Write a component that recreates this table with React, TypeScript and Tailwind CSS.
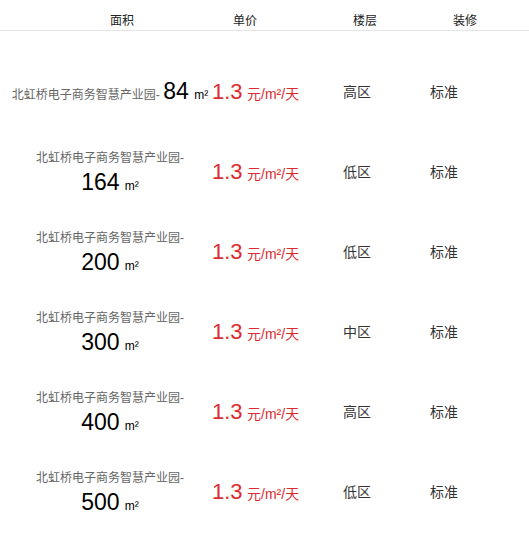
import React from "react";

const rows = [
  { area: "84", floor: "高区" },
  { area: "164", floor: "低区" },
  { area: "200", floor: "低区" },
  { area: "300", floor: "中区" },
  { area: "400", floor: "高区" },
  { area: "500", floor: "低区" },
];

export default function App() {
  return (
    <div
      className="w-[529px] h-[537px] bg-white text-[#333]"
      style={{ fontFamily: '"Liberation Sans", "Noto Sans CJK SC", sans-serif' }}
    >
      <div className="flex h-[31px] border-b border-[#e5e5e5] pl-[110px] pt-[13px] text-[12px] leading-[16px] text-[#222]">
        <div className="w-[123px]">面积</div>
        <div className="w-[120px]">单价</div>
        <div className="w-[100px]">楼层</div>
        <div>装修</div>
      </div>
      <div className="mt-[21px]">
        {rows.map((r, i) => (
          <div key={i} className="flex h-[80px] items-center">
            <div className="ml-[10px] w-[200px] text-center text-[12px] leading-[22px] text-[#666]">
              北虹桥电子商务智慧产业园-{" "}
              <span className="whitespace-nowrap text-black">
                <span className="mr-[2px] text-[23px] leading-[27px]">{r.area}</span> m²
              </span>
            </div>
            <div className="w-[133px] whitespace-nowrap pl-[2px] text-[#dd2a2f]">
              <span className="text-[22px] leading-[26px]">1.3</span>{" "}
              <span className="text-[14px]">元/m²/天</span>
            </div>
            <div className="w-[87px] text-[14px] text-[#333]">{r.floor}</div>
            <div className="text-[14px] text-[#333]">标准</div>
          </div>
        ))}
      </div>
    </div>
  );
}
